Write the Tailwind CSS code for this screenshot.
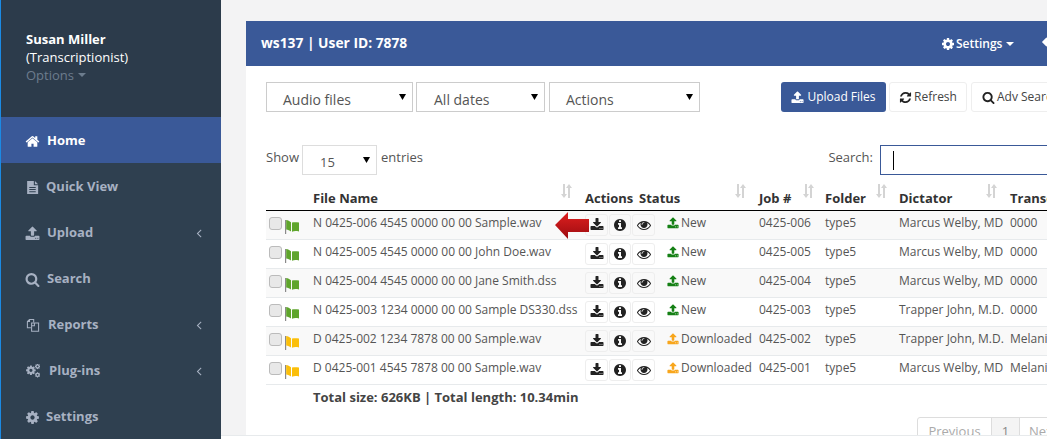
<!DOCTYPE html>
<html lang="en">
<head>
    <meta charset="UTF-8">
    <meta name="viewport" content="width=device-width, initial-scale=1.0">
    <title>Dashboard</title>
    <script src="https://cdn.jsdelivr.net/npm/@tailwindcss/browser@4"></script>
</head>
<body class="flex h-[439px] w-[1047px] overflow-hidden bg-white font-['Open_Sans',sans-serif] text-[13px] text-[#555]">
    <svg class="hidden">
        <symbol id="i-home" viewBox="0 0 1792 1792"><path fill="currentColor" d="M1472 992v480q0 26-19 45t-45 19h-384v-384h-256v384h-384q-26 0-45-19t-19-45v-480q0-1 .5-3t.5-3l575-474 575 474q1 2 1 6zm223-69l-62 74q-8 9-21 11h-3q-13 0-21-7l-692-577-692 577q-12 8-24 7-13-2-21-11l-62-74q-8-10-7-23.500t11-21.500l719-599q32-26 76-26t76 26l244 204v-195q0-14 9-23t23-9h192q14 0 23 9t9 23v408l219 182q10 8 11 21.500t-7 23.500z"/></symbol>
        <symbol id="i-file" viewBox="0 0 1792 1792"><path fill="currentColor" fill-rule="evenodd" d="M256 128h800v512h512v1024H256zM1184 128l384 384h-384zM512 832v112h768V832zM512 1088v112h768v-112zM512 1344v112h768v-112z"/></symbol>
        <symbol id="i-upload" viewBox="0 0 1792 1792"><path fill="currentColor" d="M1344 1472q0-26-19-45t-45-19-45 19-19 45 19 45 45 19 45-19 19-45zm256 0q0-26-19-45t-45-19-45 19-19 45 19 45 45 19 45-19 19-45zm128-224v320q0 40-28 68t-68 28h-1472q-40 0-68-28t-28-68v-320q0-40 28-68t68-28h427q21 56 70.500 92t110.500 36h256q61 0 110.500-36t70.500-92h427q40 0 68 28t28 68zm-325-648q-17 40-59 40h-256v448q0 26-19 45t-45 19h-256q-26 0-45-19t-19-45v-448h-256q-42 0-59-40-17-39 14-69l448-448q18-19 45-19t45 19l448 448q31 30 14 69z"/></symbol>
        <symbol id="i-download" viewBox="0 0 1792 1792"><path fill="currentColor" d="M1344 1344q0-26-19-45t-45-19-45 19-19 45 19 45 45 19 45-19 19-45zm256 0q0-26-19-45t-45-19-45 19-19 45 19 45 45 19 45-19 19-45zm128-224v320q0 40-28 68t-68 28h-1472q-40 0-68-28t-28-68v-320q0-40 28-68t68-28h465l135 136q58 56 136 56t136-56l136-136h464q40 0 68 28t28 68zm-325-569q17 41-14 70l-448 448q-18 19-45 19t-45-19l-448-448q-31-29-14-70 17-39 59-39h256v-448q0-26 19-45t45-19h256q26 0 45 19t19 45v448h256q42 0 59 39z"/></symbol>
        <symbol id="i-search" viewBox="0 0 1792 1792"><path fill="currentColor" d="M1216 832q0-185-131.500-316.500t-316.500-131.500-316.500 131.500-131.500 316.500 131.500 316.500 316.500 131.500 316.500-131.500 131.500-316.500zm512 832q0 52-38 90t-90 38q-54 0-90-38l-343-342q-179 124-399 124-143 0-273.500-55.500t-225-150-150-225-55.500-273.500 55.500-273.500 150-225 225-150 273.500-55.500 273.500 55.500 225 150 150 225 55.500 273.500q0 220-124 399l343 343q37 37 37 90z"/></symbol>
        <symbol id="i-cog" viewBox="0 0 1792 1792"><path fill="currentColor" d="M1152 896q0-106-75-181t-181-75-181 75-75 181 75 181 181 75 181-75 75-181zm512-109v222q0 12-8 23t-20 13l-185 28q-19 54-39 91 35 50 107 138 10 12 10 25t-9 23q-27 37-99 108t-94 71q-12 0-26-9l-138-108q-44 23-91 38-16 136-29 186-7 28-36 28h-222q-14 0-24.500-8.500t-11.500-21.500l-28-184q-49-16-90-37l-141 107q-10 9-25 9-14 0-25-11-126-114-165-168-7-10-7-23 0-12 8-23 15-21 51-66.500t54-70.500q-27-50-41-99l-183-27q-13-2-21-12.500t-8-23.500v-222q0-12 8-23t19-13l186-28q14-46 39-92-40-57-107-138-10-12-10-24 0-10 9-23 26-36 98.500-107.500t94.500-71.500q13 0 26 10l138 107q44-23 91-38 16-136 29-186 7-28 36-28h222q14 0 24.500 8.500t11.500 21.500l28 184q49 16 90 37l142-107q9-9 24-9 13 0 25 10 129 119 165 170 7 8 7 22 0 12-8 23-15 21-51 66.500t-54 70.500q26 50 41 98l183 28q13 2 21 12.500t8 23.500z"/></symbol>
        <symbol id="i-cogs" viewBox="0 0 20 20"><use href="#i-cog" x="-1" y="1" width="16" height="16"/><use href="#i-cog" x="12" y="-1" width="9" height="9"/><use href="#i-cog" x="12" y="11" width="9" height="9"/></symbol>
        <symbol id="i-files" viewBox="0 0 20 20"><path fill="none" stroke="currentColor" stroke-width="1.500" d="M7 14H2V5l3-3h6v4M5 2v3H2M8 7h10v12H8z"/><path fill="none" stroke="currentColor" stroke-width="1.500" d="M12 7v4H8"/></symbol>
        <symbol id="i-angle" viewBox="0 0 1792 1792"><path fill="currentColor" d="M1203 544q0 13-10 23l-393 393 393 393q10 10 10 23t-10 23l-50 50q-10 10-23 10t-23-10l-466-466q-10-10-10-23t10-23l466-466q10-10 23-10t23 10l50 50q10 10 10 23z"/></symbol>
        <symbol id="i-info" viewBox="0 0 1792 1792"><path fill="currentColor" d="M1152 1376v-160q0-14-9-23t-23-9h-96v-512q0-14-9-23t-23-9h-320q-14 0-23 9t-9 23v160q0 14 9 23t23 9h96v320h-96q-14 0-23 9t-9 23v160q0 14 9 23t23 9h448q14 0 23-9t9-23zm-128-896v-160q0-14-9-23t-23-9h-192q-14 0-23 9t-9 23v160q0 14 9 23t23 9h192q14 0 23-9t9-23zm640 416q0 209-103 385.500t-279.500 279.500-385.500 103-385.500-103-279.500-279.500-103-385.500 103-385.500 279.500-279.500 385.500-103 385.500 103 279.500 279.500 103 385.500z"/></symbol>
        <symbol id="i-eye" viewBox="0 0 1792 1792"><path fill="currentColor" d="M1664 960q-152-236-381-353 61 104 61 225 0 185-131.500 316.500t-316.500 131.500-316.500-131.500-131.500-316.500q0-121 61-225-229 117-381 353 133 205 333.500 326.500t434.500 121.500 434.500-121.500 333.500-326.500zm-720-384q0-20-14-34t-34-14q-125 0-214.500 89.500t-89.500 214.500q0 20 14 34t34 14 34-14 14-34q0-86 61-147t147-61q20 0 34-14t14-34zm848 384q0 34-20 69-140 230-376.500 368.500t-499.500 138.500-499.500-139-376.500-368q-20-35-20-69t20-69q140-229 376.500-368t499.500-139 499.500 139 376.500 368q20 35 20 69z"/></symbol>
        <symbol id="i-refresh" viewBox="0 0 1792 1792"><path fill="currentColor" d="M1639 1056q0 5-1 7-64 268-268 434.500t-478 166.500q-146 0-282.500-55t-243.500-157l-129 129q-19 19-45 19t-45-19-19-45v-448q0-26 19-45t45-19h448q26 0 45 19t19 45-19 45l-137 137q71 66 161 102t187 36q134 0 250-65t186-179q11-17 53-117 8-23 30-23h192q13 0 22.500 9.500t9.500 22.500zm25-800v448q0 26-19 45t-45 19h-448q-26 0-45-19t-19-45 19-45l138-138q-148-137-349-137-134 0-250 65t-186 179q-11 17-53 117-8 23-30 23h-199q-13 0-22.500-9.500t-9.500-22.500v-7q65-268 270-434.500t480-166.500q146 0 284 55.500t245 156.500l130-129q19-19 45-19t45 19 19 45z"/></symbol>
        <symbol id="i-reply" viewBox="0 0 1792 1792"><path fill="currentColor" d="M1792 1120q0 166-127 451-3 7-10.500 24t-13.500 30-13 22q-12 17-28 17-15 0-23.500-10t-8.500-25q0-9 2.500-26.500t2.500-23.500q5-68 5-123 0-101-17.500-181t-48.500-138.500-80-101-105.500-69.500-133-42.500-154-21.500-175.500-6h-224v256q0 26-19 45t-45 19-45-19l-512-512q-19-19-19-45t19-45l512-512q19-19 45-19t45 19 19 45v256h224q713 0 875 403 53 134 53 333z"/></symbol>
        <symbol id="i-sort" viewBox="0 0 13 14"><path fill="#d4d4d4" d="M3 0h2v10h2l-3 4-3-4h2zM8 4h2v10H8V4zM9 0l3 4H6z"/></symbol>
        <symbol id="i-flag" viewBox="0 0 14 15"><path fill="#8a8a8a" d="M0 1h1.200v14H0z"/><path fill="currentColor" d="M1.200 1c1.800.4 3.300 1 4.800 2.200v9.300C4.500 11.500 3 11 1.200 10.600z"/><path fill="currentColor" d="M7 3.500c2-.5 4-.5 7 0v9c-3-.6-5-.5-7 .2z"/></symbol>
        <symbol id="i-caret" viewBox="0 0 8 8"><path fill="currentColor" d="M0 1h8L4 8z"/></symbol>
    </svg>

    <!-- sidebar -->
    <nav class="w-[221px] shrink-0 border-l border-l-[#1b8ae4] bg-[#2f4050] font-bold text-[#a7b1c2]">
        <div class="h-[117px] bg-[#2c3b4b] pl-[25px] pt-[30px] leading-[18px] text-white">
            <p class="font-bold">Susan Miller</p>
            <p class="font-normal">(Transcriptionist)</p>
            <p class="flex items-center gap-1 font-normal text-[#6c7c8d]">Options <span class="border-x-[4px] border-t-[4px] border-x-transparent border-t-[#6c7c8d]"></span></p>
        </div>
        <a class="flex h-[46px] items-center gap-[7px] bg-[#3a5998] pl-[24px] pt-[2px] text-white"><svg class="size-[15px]"><use href="#i-home"/></svg>Home</a>
        <a class="flex h-[46px] items-center gap-[6px] pl-[24px] pt-[2px]"><svg class="size-[15px]"><use href="#i-file"/></svg>Quick View</a>
        <a class="flex h-[46px] items-center gap-[7px] pl-[24px] pr-[15px] pt-[2px]"><svg class="size-[15px]"><use href="#i-upload"/></svg>Upload<svg class="ml-auto size-[14px]"><use href="#i-angle"/></svg></a>
        <a class="flex h-[46px] items-center gap-[7px] pl-[24px] pt-[2px]"><svg class="size-[15px]"><use href="#i-search"/></svg>Search</a>
        <a class="flex h-[46px] items-center gap-[8px] pl-[25px] pr-[15px] pt-[2px]"><svg class="size-[14px]"><use href="#i-files"/></svg>Reports<svg class="ml-auto size-[14px]"><use href="#i-angle"/></svg></a>
        <a class="flex h-[46px] items-center gap-[9px] pl-[25px] pr-[15px] pt-[2px]"><svg class="size-[14px]"><use href="#i-cogs"/></svg>Plug-ins<svg class="ml-auto size-[14px]"><use href="#i-angle"/></svg></a>
        <a class="flex h-[46px] items-center gap-[6px] pl-[24px] pt-[2px]"><svg class="size-[15px]"><use href="#i-cog"/></svg>Settings</a>
    </nav>

    <div class="flex min-w-0 flex-1 flex-col bg-[#f3f3f4]">
        <div class="min-h-0 flex-1 overflow-hidden pl-[25px] pt-[21px]">
            <div class="h-full w-[900px] bg-white">
                <!-- panel heading -->
                <div class="flex h-[45px] items-center bg-[#3a5998] pl-[15px] text-white">
                    <h1 class="w-[680px] text-[13.8px] font-bold">ws137 | User ID: 7878</h1>
                    <span class="flex items-center gap-[1px] text-[12px] font-semibold"><svg class="size-[14px]"><use href="#i-cog"/></svg>Settings<span class="ml-[3px] border-x-[4px] border-t-[4px] border-x-transparent border-t-white"></span></span>
                    <svg class="ml-[28px] size-[14px]"><use href="#i-reply"/></svg>
                </div>

                <div class="pl-[20px]">
                    <!-- filters and buttons -->
                    <div class="flex pt-[16px]">
                        <div class="flex h-[30px] w-[147px] items-center justify-between border border-[#ccc] pl-[16px] pr-[6px] pt-[4px] text-[14px]">Audio files<svg class="mb-[6px] size-[7px] text-black"><use href="#i-caret"/></svg></div>
                        <div class="ml-[3px] flex h-[30px] w-[129px] items-center justify-between border border-[#ccc] pl-[17px] pr-[6px] pt-[4px] text-[14px]">All dates<svg class="mb-[6px] size-[7px] text-black"><use href="#i-caret"/></svg></div>
                        <div class="ml-[4px] flex h-[30px] w-[151px] items-center justify-between border border-[#ccc] pl-[16px] pr-[6px] pt-[4px] text-[14px]">Actions<svg class="mb-[6px] size-[7px] text-black"><use href="#i-caret"/></svg></div>
                        <button class="ml-[81px] flex h-[30px] w-[105px] items-center justify-center gap-[3px] rounded-[3px] bg-[#3a5998] text-[12px] font-medium text-white"><svg class="size-[13px]"><use href="#i-upload"/></svg>Upload Files</button>
                        <button class="ml-[3px] flex h-[30px] w-[78px] items-center justify-center gap-[2px] rounded-[3px] border border-[#eee] text-[12px] text-[#444]"><svg class="size-[13px] text-[#222]"><use href="#i-refresh"/></svg>Refresh</button>
                        <button class="ml-[4px] flex h-[30px] w-[100px] items-center justify-start gap-[2px] rounded-[3px] border border-[#eee] pl-[10px] text-[12px] text-[#444]"><svg class="size-[13px] text-[#222]"><use href="#i-search"/></svg>Adv Search</button>
                    </div>

                    <!-- length and search -->
                    <div class="mt-[33px] flex h-[30px] items-center">
                        <span class="mb-[4px]">Show</span>
                        <div class="ml-[3px] flex h-[30px] w-[75px] items-center justify-between border border-[#ddd] pl-[17px] pr-[6px] pt-[5px]">15<svg class="mb-[6px] size-[7px] text-black"><use href="#i-caret"/></svg></div>
                        <span class="mb-[4px] ml-[4px]">entries</span>
                        <span class="mb-[4px] ml-auto mr-[7px]">Search:</span>
                        <div class="flex h-[30px] w-[266px] items-center border border-[#3a5998] pl-[12px]"><span class="h-[19px] w-px bg-black"></span></div>
                    </div>

                    <!-- table -->
                    <div class="relative text-[12px]">
                        <div class="grid h-[36px] grid-cols-[47px_272px_54px_120px_66px_74px_111px_100px] border-b border-b-black text-[13px] font-bold text-[#333]">
                            <div></div>
                            <div class="flex items-end justify-between pb-[2px] pr-[12px]">File Name<svg class="mb-[10px] h-[14px] w-[13px]"><use href="#i-sort"/></svg></div>
                            <div class="flex items-end pb-[2px]">Actions</div>
                            <div class="flex items-end justify-between pb-[2px] pr-[12px]">Status<svg class="mb-[10px] h-[14px] w-[13px]"><use href="#i-sort"/></svg></div>
                            <div class="flex items-end justify-between pb-[2px] pr-[10px]">Job #<svg class="mb-[10px] h-[14px] w-[13px]"><use href="#i-sort"/></svg></div>
                            <div class="flex items-end justify-between pb-[2px] pr-[11px]">Folder<svg class="mb-[10px] h-[14px] w-[13px]"><use href="#i-sort"/></svg></div>
                            <div class="flex items-end justify-between pb-[2px] pr-[12px]">Dictator<svg class="mb-[10px] h-[14px] w-[13px]"><use href="#i-sort"/></svg></div>
                            <div class="flex items-end pb-[2px]">Transcriptionist</div>
                        </div>

                        <div class="grid h-[29px] grid-cols-[47px_272px_82px_92px_66px_74px_111px_100px] items-center border-b border-b-[#e7eaec] bg-[#f9f9f9]">
                            <div class="flex items-center gap-[3px] pl-[3px]"><span class="mb-[3px] size-[13px] rounded-[3px] border border-[#bbb] bg-[#e8e8e8]"></span><svg class="mt-[2px] h-[15px] w-[14px] text-[#5fa52c]"><use href="#i-flag"/></svg></div>
                            <div class="mb-[5px] whitespace-nowrap">N 0425-006 4545 0000 00 00 Sample.wav</div>
                            <div class="flex gap-px"><span class="flex h-[22px] w-[23px] items-center justify-center rounded-[3px] border border-[#eee] text-[#222]"><svg class="size-[14px]"><use href="#i-download"/></svg></span><span class="flex h-[22px] w-[22px] items-center justify-center rounded-[3px] border border-[#eee] text-[#222]"><svg class="size-[14px]"><use href="#i-info"/></svg></span><span class="flex h-[22px] w-[23px] items-center justify-center rounded-[3px] border border-[#eee] text-[#222]"><svg class="size-[14px]"><use href="#i-eye"/></svg></span></div>
                            <div class="mb-[5px] flex items-center gap-[2px]"><svg class="size-[12px] text-[#158015]"><use href="#i-upload"/></svg>New</div>
                            <div class="mb-[5px]">0425-006</div><div class="mb-[5px]">type5</div><div class="mb-[5px] whitespace-nowrap">Marcus Welby, MD</div><div class="mb-[5px]">0000</div>
                        </div>
                        <div class="grid h-[29px] grid-cols-[47px_272px_82px_92px_66px_74px_111px_100px] items-center border-b border-b-[#e7eaec]">
                            <div class="flex items-center gap-[3px] pl-[3px]"><span class="mb-[3px] size-[13px] rounded-[3px] border border-[#bbb] bg-[#e8e8e8]"></span><svg class="mt-[2px] h-[15px] w-[14px] text-[#5fa52c]"><use href="#i-flag"/></svg></div>
                            <div class="mb-[5px] whitespace-nowrap">N 0425-005 4545 0000 00 00 John Doe.wav</div>
                            <div class="flex gap-px"><span class="flex h-[22px] w-[23px] items-center justify-center rounded-[3px] border border-[#eee] text-[#222]"><svg class="size-[14px]"><use href="#i-download"/></svg></span><span class="flex h-[22px] w-[22px] items-center justify-center rounded-[3px] border border-[#eee] text-[#222]"><svg class="size-[14px]"><use href="#i-info"/></svg></span><span class="flex h-[22px] w-[23px] items-center justify-center rounded-[3px] border border-[#eee] text-[#222]"><svg class="size-[14px]"><use href="#i-eye"/></svg></span></div>
                            <div class="mb-[5px] flex items-center gap-[2px]"><svg class="size-[12px] text-[#158015]"><use href="#i-upload"/></svg>New</div>
                            <div class="mb-[5px]">0425-005</div><div class="mb-[5px]">type5</div><div class="mb-[5px] whitespace-nowrap">Marcus Welby, MD</div><div class="mb-[5px]">0000</div>
                        </div>
                        <div class="grid h-[29px] grid-cols-[47px_272px_82px_92px_66px_74px_111px_100px] items-center border-b border-b-[#e7eaec] bg-[#f9f9f9]">
                            <div class="flex items-center gap-[3px] pl-[3px]"><span class="mb-[3px] size-[13px] rounded-[3px] border border-[#bbb] bg-[#e8e8e8]"></span><svg class="mt-[2px] h-[15px] w-[14px] text-[#5fa52c]"><use href="#i-flag"/></svg></div>
                            <div class="mb-[5px] whitespace-nowrap">N 0425-004 4545 0000 00 00 Jane Smith.dss</div>
                            <div class="flex gap-px"><span class="flex h-[22px] w-[23px] items-center justify-center rounded-[3px] border border-[#eee] text-[#222]"><svg class="size-[14px]"><use href="#i-download"/></svg></span><span class="flex h-[22px] w-[22px] items-center justify-center rounded-[3px] border border-[#eee] text-[#222]"><svg class="size-[14px]"><use href="#i-info"/></svg></span><span class="flex h-[22px] w-[23px] items-center justify-center rounded-[3px] border border-[#eee] text-[#222]"><svg class="size-[14px]"><use href="#i-eye"/></svg></span></div>
                            <div class="mb-[5px] flex items-center gap-[2px]"><svg class="size-[12px] text-[#158015]"><use href="#i-upload"/></svg>New</div>
                            <div class="mb-[5px]">0425-004</div><div class="mb-[5px]">type5</div><div class="mb-[5px] whitespace-nowrap">Marcus Welby, MD</div><div class="mb-[5px]">0000</div>
                        </div>
                        <div class="grid h-[29px] grid-cols-[47px_272px_82px_92px_66px_74px_111px_100px] items-center border-b border-b-[#e7eaec]">
                            <div class="flex items-center gap-[3px] pl-[3px]"><span class="mb-[3px] size-[13px] rounded-[3px] border border-[#bbb] bg-[#e8e8e8]"></span><svg class="mt-[2px] h-[15px] w-[14px] text-[#5fa52c]"><use href="#i-flag"/></svg></div>
                            <div class="mb-[5px] whitespace-nowrap">N 0425-003 1234 0000 00 00 Sample DS330.dss</div>
                            <div class="flex gap-px"><span class="flex h-[22px] w-[23px] items-center justify-center rounded-[3px] border border-[#eee] text-[#222]"><svg class="size-[14px]"><use href="#i-download"/></svg></span><span class="flex h-[22px] w-[22px] items-center justify-center rounded-[3px] border border-[#eee] text-[#222]"><svg class="size-[14px]"><use href="#i-info"/></svg></span><span class="flex h-[22px] w-[23px] items-center justify-center rounded-[3px] border border-[#eee] text-[#222]"><svg class="size-[14px]"><use href="#i-eye"/></svg></span></div>
                            <div class="mb-[5px] flex items-center gap-[2px]"><svg class="size-[12px] text-[#158015]"><use href="#i-upload"/></svg>New</div>
                            <div class="mb-[5px]">0425-003</div><div class="mb-[5px]">type5</div><div class="mb-[5px] whitespace-nowrap">Trapper John, M.D.</div><div class="mb-[5px]">0000</div>
                        </div>
                        <div class="grid h-[29px] grid-cols-[47px_272px_82px_92px_66px_74px_111px_100px] items-center border-b border-b-[#e7eaec] bg-[#f9f9f9]">
                            <div class="flex items-center gap-[3px] pl-[3px]"><span class="mb-[3px] size-[13px] rounded-[3px] border border-[#bbb] bg-[#e8e8e8]"></span><svg class="mt-[2px] h-[15px] w-[14px] text-[#fbbf0a]"><use href="#i-flag"/></svg></div>
                            <div class="mb-[5px] whitespace-nowrap">D 0425-002 1234 7878 00 00 Sample.wav</div>
                            <div class="flex gap-px"><span class="flex h-[22px] w-[23px] items-center justify-center rounded-[3px] border border-[#eee] text-[#222]"><svg class="size-[14px]"><use href="#i-download"/></svg></span><span class="flex h-[22px] w-[22px] items-center justify-center rounded-[3px] border border-[#eee] text-[#222]"><svg class="size-[14px]"><use href="#i-info"/></svg></span><span class="flex h-[22px] w-[23px] items-center justify-center rounded-[3px] border border-[#eee] text-[#222]"><svg class="size-[14px]"><use href="#i-eye"/></svg></span></div>
                            <div class="mb-[5px] flex items-center gap-[2px]"><svg class="size-[12px] text-[#f8a61c]"><use href="#i-upload"/></svg>Downloaded</div>
                            <div class="mb-[5px]">0425-002</div><div class="mb-[5px]">type5</div><div class="mb-[5px] whitespace-nowrap">Trapper John, M.D.</div><div class="mb-[5px]">Melanie</div>
                        </div>
                        <div class="grid h-[29px] grid-cols-[47px_272px_82px_92px_66px_74px_111px_100px] items-center border-b border-b-[#e7eaec]">
                            <div class="flex items-center gap-[3px] pl-[3px]"><span class="mb-[3px] size-[13px] rounded-[3px] border border-[#bbb] bg-[#e8e8e8]"></span><svg class="mt-[2px] h-[15px] w-[14px] text-[#fbbf0a]"><use href="#i-flag"/></svg></div>
                            <div class="mb-[5px] whitespace-nowrap">D 0425-001 4545 7878 00 00 Sample.wav</div>
                            <div class="flex gap-px"><span class="flex h-[22px] w-[23px] items-center justify-center rounded-[3px] border border-[#eee] text-[#222]"><svg class="size-[14px]"><use href="#i-download"/></svg></span><span class="flex h-[22px] w-[22px] items-center justify-center rounded-[3px] border border-[#eee] text-[#222]"><svg class="size-[14px]"><use href="#i-info"/></svg></span><span class="flex h-[22px] w-[23px] items-center justify-center rounded-[3px] border border-[#eee] text-[#222]"><svg class="size-[14px]"><use href="#i-eye"/></svg></span></div>
                            <div class="mb-[5px] flex items-center gap-[2px]"><svg class="size-[12px] text-[#f8a61c]"><use href="#i-upload"/></svg>Downloaded</div>
                            <div class="mb-[5px]">0425-001</div><div class="mb-[5px]">type5</div><div class="mb-[5px] whitespace-nowrap">Marcus Welby, MD</div><div class="mb-[5px]">Melanie</div>
                        </div>

                        <p class="ml-[47px] mt-[3px] text-[13px] font-bold leading-[18px] text-[#444]">Total size: 626KB | Total length: 10.34min</p>

                        <!-- arrow pointing at the first row -->
                        <svg class="absolute left-[289px] top-[36px] h-[28px] w-[35px]" viewBox="0 0 35 28">
                            <defs><linearGradient id="arrow-red" x1="0" y1="0" x2="0" y2="1"><stop offset="0" stop-color="#e02020"/><stop offset="1" stop-color="#9c0c10"/></linearGradient></defs>
                            <path fill="url(#arrow-red)" d="M0 14 13 1v7h21v13H13v7z"/>
                        </svg>
                    </div>

                    <!-- pagination -->
                    <div class="ml-[651px] mt-[11px] flex h-[30px] w-[180px] rounded-[3px] border border-[#ddd] text-[#aaa]">
                        <span class="flex w-[73px] items-center justify-center">Previous</span>
                        <span class="flex w-[29px] items-center justify-center border-x border-[#ddd] bg-[#f4f4f4] text-[#888]">1</span>
                        <span class="flex flex-1 items-center pl-[9px]">Next</span>
                    </div>
                </div>
            </div>
        </div>
        <div class="h-[4px] border-t border-t-[#e7eaec] bg-white"></div>
    </div>
</body>
</html>
